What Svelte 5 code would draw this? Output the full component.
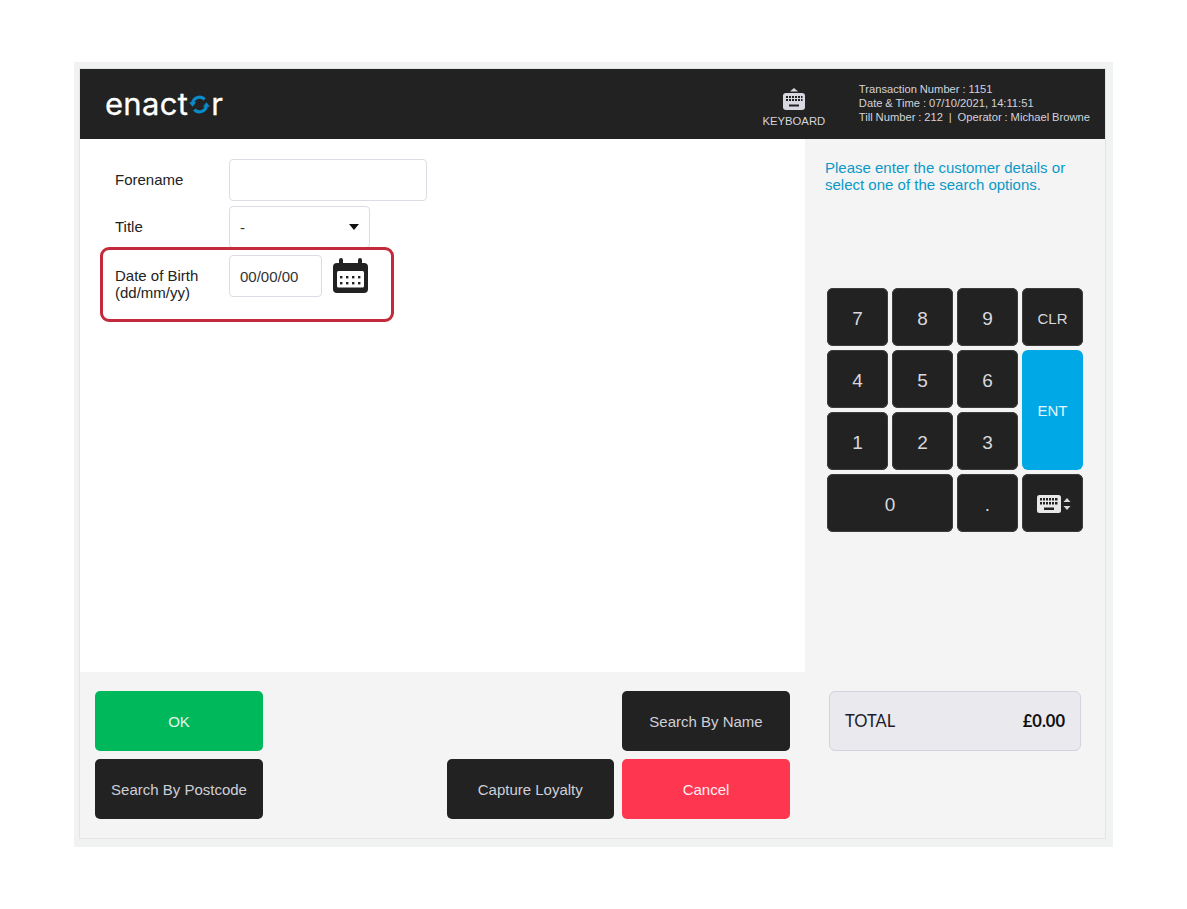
<script lang="ts">
  const info = [
    'Transaction Number : 1151',
    'Date & Time : 07/10/2021, 14:11:51',
    'Till Number : 212 \u00a0|\u00a0 Operator : Michael Browne'
  ];
  const keys = [
    { label: '7' }, { label: '8' }, { label: '9' }, { label: 'CLR', small: true },
    { label: '4' }, { label: '5' }, { label: '6' }, { label: 'ENT', small: true, ent: true },
    { label: '1' }, { label: '2' }, { label: '3' },
    { label: '0', wide: true }, { label: '.' }
  ];
</script>

<div class="frame">
  <div class="screen">
    <header>
      <div class="logo">
        <span>enact</span><svg class="logo-o" viewBox="0 0 22 20" width="21" height="19" aria-hidden="true">
          <path d="M3.700 8.500A7.500 7.500 0 0 1 16.500 4.700" fill="none" stroke="#0b8ac9" stroke-width="3.400"/>
          <path d="M18.300 11.500A7.500 7.500 0 0 1 5.500 15.300" fill="none" stroke="#0b8ac9" stroke-width="3.400"/>
          <path d="M0 7.600h7.400L3.700 12.400z" fill="#0b8ac9"/>
          <path d="M22 12.400h-7.400L18.300 7.600z" fill="#0b8ac9"/>
        </svg><span>r</span>
      </div>
      <div class="kb">
        <svg viewBox="0 0 24 24" width="24" height="24" aria-hidden="true">
          <path d="M12 1l4 3.500H8z" fill="#d8d8e0"/>
          <rect x="1" y="6" width="22" height="17" rx="3" fill="#d8d8e0"/>
          <g fill="#222">
            <path d="M4 9h2v2H4zM7 9h2v2H7zM10 9h2v2h-2zM13 9h2v2h-2zM16 9h2v2h-2zM19 9h1.500v2H19z"/>
            <path d="M4 12h2v2H4zM7 12h2v2H7zM10 12h2v2h-2zM13 12h2v2h-2zM16 12h2v2h-2zM19 12h1.500v2H19z"/>
            <path d="M7 17.500h10v2H7z"/>
          </g>
        </svg>
        <span>KEYBOARD</span>
      </div>
      <div class="info">
        {#each info as line}
          <div>{line}</div>
        {/each}
      </div>
    </header>

    <div class="middle">
      <section class="form">
        <div class="row">
          <label for="forename">Forename</label>
          <input id="forename" class="forename" type="text" />
        </div>
        <div class="row">
          <label for="title">Title</label>
          <div class="select">
            <span id="title">-</span>
            <i class="caret"></i>
          </div>
        </div>
        <div class="row highlight">
          <label for="dob">Date of Birth<br />(dd/mm/yy)</label>
          <input id="dob" class="dob" type="text" value="00/00/00" />
          <svg class="cal" viewBox="0 0 35 35" width="35" height="35" aria-hidden="true">
            <path d="M6 5V2a2 2 0 0 1 4 0v3h15V2a2 2 0 0 1 4 0v3h2a4 4 0 0 1 4 4v22a4 4 0 0 1-4 4H4a4 4 0 0 1-4-4V9a4 4 0 0 1 4-4z" fill="#222"/>
            <rect x="4" y="13" width="27" height="16.500" rx="1.500" fill="#fff"/>
            <g fill="#222">
              <rect x="7" y="18" width="2.400" height="2.400"/><rect x="13" y="18" width="2.400" height="2.400"/><rect x="19" y="18" width="2.400" height="2.400"/><rect x="25" y="18" width="2.400" height="2.400"/>
              <rect x="7" y="24" width="2.400" height="2.400"/><rect x="13" y="24" width="2.400" height="2.400"/><rect x="19" y="24" width="2.400" height="2.400"/><rect x="25" y="24" width="2.400" height="2.400"/>
            </g>
          </svg>
        </div>
      </section>

      <aside class="side">
        <p class="prompt">Please enter the customer details or select one of the search options.</p>
        <div class="pad">
          {#each keys as k}
            <button class="key" class:small={k.small} class:ent={k.ent} class:wide={k.wide}>{k.label}</button>
          {/each}
          <button class="key icon" aria-label="Keyboard">
            <svg viewBox="0 0 34 18" width="34" height="18" aria-hidden="true">
              <rect x="0" y="0" width="24" height="18" rx="2.500" fill="#e8e8e8"/>
              <g fill="#222">
                <path d="M3 3h2v2.500H3zM6 3h2v2.500H6zM9 3h2v2.500H9zM12 3h2v2.500h-2zM15 3h2v2.500h-2zM18 3h2.500v2.500H18z"/>
                <path d="M3 7h2v2.500H3zM6 7h2v2.500H6zM9 7h2v2.500H9zM12 7h2v2.500h-2zM15 7h2v2.500h-2zM18 7h2.500v2.500H18z"/>
                <path d="M7 12.500h10V15H7z"/>
              </g>
              <path d="M30 3l3.500 4h-7zM30 15l-3.500-4h7z" fill="#d8d8d8"/>
            </svg>
          </button>
        </div>
      </aside>
    </div>

    <footer>
      <div class="actions">
        <button class="act ok">OK</button>
        <span></span>
        <span></span>
        <button class="act">Search By Name</button>
        <button class="act">Search By Postcode</button>
        <span></span>
        <button class="act">Capture Loyalty</button>
        <button class="act cancel">Cancel</button>
      </div>
      <div class="total">
        <span>TOTAL</span>
        <strong>£0.00</strong>
      </div>
    </footer>
  </div>
</div>

<style>
:global(body) {
  margin: 0;
  background: #fff;
  font-family: "Liberation Sans", Arial, sans-serif;
}

.frame {
  width: 1039px;
  height: 785px;
  margin: 62px 0 0 74px;
  padding: 7px 8px 8px 6px;
  box-sizing: border-box;
  background: #f1f2f2;
}

.screen {
  height: 769px;
  display: flex;
  flex-direction: column;
  background: #f4f4f4;
  box-shadow: 0 0 0 1px #e4e4e6;
}

header {
  height: 70px;
  flex: none;
  display: flex;
  align-items: center;
  background: #222;
  color: #d3d3dc;
}

.logo {
  margin: -2px 0 0 25px;
  display: flex;
  align-items: center;
  font-family: "Inter", sans-serif;
  font-size: 31px;
  letter-spacing: 0.3px;
  -webkit-text-stroke: 0.3px #fff;
  color: #fff;
  height: 70px;
}

.logo-o {
  margin: 3px 1px 0 1px;
}

.kb {
  margin-left: auto;
  width: 64px;
  display: flex;
  flex-direction: column;
  align-items: center;
  font-size: 11.3px;
  line-height: 13px;
  margin-top: 6px;
}

.kb svg {
  margin-bottom: 4px;
}

.info {
  margin-left: 33px;
  margin-right: 15px;
  font-size: 11.2px;
  word-spacing: -0.2px;
  line-height: 14px;
  margin-top: -2px;
}

.middle {
  flex: 1;
  display: flex;
}

.form {
  width: 725px;
  background: #fff;
  padding: 20px 0 0 35px;
  box-sizing: border-box;
}

.row {
  display: flex;
  align-items: center;
  margin-bottom: 5px;
}

label {
  width: 114px;
  flex: none;
  margin-top: -2px;
  font-size: 15px;
  line-height: 17px;
  color: #222;
}

input,
.select {
  height: 42px;
  box-sizing: border-box;
  border: 1px solid #dcdce4;
  border-radius: 4px;
  background: #fff;
  font: 15px "Liberation Sans", Arial, sans-serif;
  color: #333;
  padding: 0 10px;
}

.forename {
  width: 198px;
}

.select {
  width: 141px;
  display: flex;
  align-items: center;
  justify-content: space-between;
}

.caret {
  width: 0;
  height: 0;
  border-left: 5.5px solid transparent;
  border-right: 5.5px solid transparent;
  border-top: 6px solid #111;
}

.highlight {
  position: relative;
  width: 294px;
  height: 75px;
  margin: -6px 0 0 -15px;
  padding: 5px 0 0 12px;
  box-sizing: border-box;
  align-items: flex-start;
  border: 3px solid #c42a3b;
  border-radius: 9px;
}

.highlight label {
  margin-top: 12px;
}

.dob {
  width: 93px;
}

.cal {
  margin: 3px 0 0 11px;
}

.side {
  flex: 1;
  padding: 20px 20px 0 20px;
}

.prompt {
  margin: 0;
  width: 250px;
  font-size: 15px;
  line-height: 17px;
  color: #0a99c9;
}

.pad {
  margin: 95px 0 0 2px;
  display: grid;
  grid-template-columns: repeat(4, 61px);
  grid-auto-rows: 58px;
  gap: 4px;
}

button {
  border: none;
  font-family: inherit;
  padding: 0;
}

.key {
  display: flex;
  align-items: center;
  justify-content: center;
  padding-top: 4px;
  border-radius: 6px;
  background: #222;
  box-shadow: inset 0 0 0 1px #3c3c3c;
  color: #d8d8de;
  font-size: 19px;
}

.key.small {
  padding-top: 2px;
  font-size: 15px;
}

.key.ent {
  grid-column: 4;
  grid-row: 2 / span 2;
  padding-top: 0;
  background: #00a9e6;
  box-shadow: none;
  color: #e8f6fc;
}

.key.wide {
  grid-column: span 2;
}

.key.icon {
  padding: 1px 0 0 2px;
}

footer {
  height: 166px;
  flex: none;
  display: flex;
  padding: 19px 24px 0 15px;
  box-sizing: border-box;
}

.actions {
  display: grid;
  grid-template-columns: 168px 167.5px 167.5px 168px;
  grid-auto-rows: 60px;
  gap: 8px;
}

.act {
  border-radius: 5px;
  background: #222;
  color: #cfcfd8;
  font-size: 15px;
}

.act.ok {
  background: #00b85c;
  color: #e4f7ec;
}

.act.cancel {
  background: #ff3650;
  color: #ffeef0;
}

.total {
  width: 252px;
  height: 60px;
  margin-left: 39px;
  padding: 0 15px;
  box-sizing: border-box;
  display: flex;
  align-items: center;
  justify-content: space-between;
  background: #e9e9ee;
  border: 1px solid #d2d2e0;
  border-radius: 6px;
  font-family: "Lato", sans-serif;
  font-size: 16.5px;
  color: #1c1c2c;
}

.total strong {
  color: #111;
}
</style>
